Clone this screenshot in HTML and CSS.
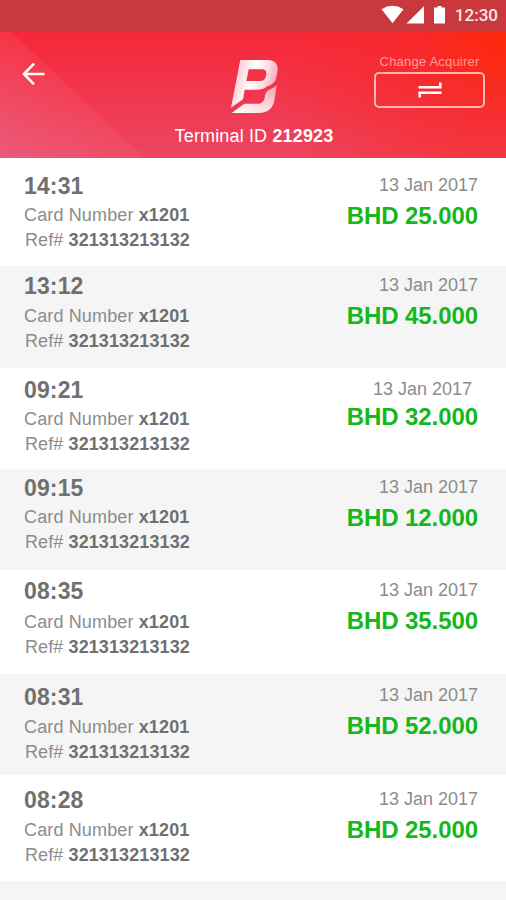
FILE: index.html
```
<!DOCTYPE html>
<html lang="en">
<head>
    <meta charset="UTF-8">
    <meta name="viewport" content="width=device-width, initial-scale=1.0">
    <title>Terminal Transactions</title>
    <link rel="stylesheet" href="styles.css">
</head>
<body>
    <div class="status-bar">
        <svg class="status-icons" width="66" height="20" viewBox="0 0 66 20">
            <path d="M0.5 4.2 Q11.5 -2.6 22.5 4.2 L11.5 18.2 Z"/>
            <path d="M43 1.2 V18.5 H25.5 Z"/>
            <path d="M53 2.5 h3.5 v-1.5 h4 v1.5 h3.5 v16 h-11 Z"/>
        </svg>
        <span class="clock">12:30</span>
    </div>

    <header class="header">
        <a href="#" class="back" aria-label="Back">
            <svg width="24" height="24" viewBox="0 0 24 24">
                <path d="M12 1.7 L2 12 L12 22.3 M2 12 H22.5"/>
            </svg>
        </a>
        <div class="brand">
            <svg width="80" height="70" viewBox="0 0 240 210">
                <defs>
                    <linearGradient id="shine" x1="0" y1="0.1" x2="1" y2="0.4">
                        <stop offset="0" stop-color="#fff"/>
                        <stop offset="0.22" stop-color="#fbd5db"/>
                        <stop offset="0.48" stop-color="#fff"/>
                        <stop offset="0.75" stop-color="#fbdde2"/>
                        <stop offset="1" stop-color="#f6a3b0"/>
                    </linearGradient>
                    <linearGradient id="shine-low" x1="0" y1="1" x2="1" y2="0">
                        <stop offset="0" stop-color="#fff"/>
                        <stop offset="0.5" stop-color="#fbd9df"/>
                        <stop offset="1" stop-color="#f6a0ae"/>
                    </linearGradient>
                </defs>
                <path fill="url(#shine)" d="M76 30 H160 C181 30 192 45 187 68 L184 82 C181 97 171 106 156 109 C148 117 138 119 125 119 H89 L84 148 L48 173 Z M101 58 L94 93 H136 C146 93 151 88 153 78 C156 65 152 58 141 58 Z" fill-rule="evenodd"/>
                <path fill="url(#shine-low)" d="M50 189 L88 161 H127 C139 161 146 155 149 143 C150 130 156 122 165 118 C173 115 179 111 185 105 L179 147 C175 175 159 189 131 189 Z"/>
            </svg>
            <p class="terminal">Terminal ID <b>212923</b></p>
        </div>
        <div class="acquirer">
            <span>Change Acquirer</span>
            <a href="#" class="swap" aria-label="Change Acquirer">
                <svg width="26" height="18" viewBox="0 0 26 18">
                    <path d="M1.5 6.2 H23.3 V1.5 M24.5 11.8 H2.7 V16.5"/>
                </svg>
            </a>
        </div>
    </header>

    <div class="list">
        <div class="row">
            <div class="info">
                <h3>14:31</h3>
                <p>Card Number <b>x1201</b></p>
                <p class="ref">Ref# <b>321313213132</b></p>
            </div>
            <div class="payment">
                <p class="date">13 Jan 2017</p>
                <p class="amount">BHD 25.000</p>
            </div>
        </div>
        <div class="row">
            <div class="info">
                <h3>13:12</h3>
                <p>Card Number <b>x1201</b></p>
                <p class="ref">Ref# <b>321313213132</b></p>
            </div>
            <div class="payment">
                <p class="date">13 Jan 2017</p>
                <p class="amount">BHD 45.000</p>
            </div>
        </div>
        <div class="row">
            <div class="info">
                <h3>09:21</h3>
                <p>Card Number <b>x1201</b></p>
                <p class="ref">Ref# <b>321313213132</b></p>
            </div>
            <div class="payment">
                <p class="date">13 Jan 2017</p>
                <p class="amount">BHD 32.000</p>
            </div>
        </div>
        <div class="row">
            <div class="info">
                <h3>09:15</h3>
                <p>Card Number <b>x1201</b></p>
                <p class="ref">Ref# <b>321313213132</b></p>
            </div>
            <div class="payment">
                <p class="date">13 Jan 2017</p>
                <p class="amount">BHD 12.000</p>
            </div>
        </div>
        <div class="row">
            <div class="info">
                <h3>08:35</h3>
                <p>Card Number <b>x1201</b></p>
                <p class="ref">Ref# <b>321313213132</b></p>
            </div>
            <div class="payment">
                <p class="date">13 Jan 2017</p>
                <p class="amount">BHD 35.500</p>
            </div>
        </div>
        <div class="row">
            <div class="info">
                <h3>08:31</h3>
                <p>Card Number <b>x1201</b></p>
                <p class="ref">Ref# <b>321313213132</b></p>
            </div>
            <div class="payment">
                <p class="date">13 Jan 2017</p>
                <p class="amount">BHD 52.000</p>
            </div>
        </div>
        <div class="row">
            <div class="info">
                <h3>08:28</h3>
                <p>Card Number <b>x1201</b></p>
                <p class="ref">Ref# <b>321313213132</b></p>
            </div>
            <div class="payment">
                <p class="date">13 Jan 2017</p>
                <p class="amount">BHD 25.000</p>
            </div>
        </div>
    </div>
</body>
</html>
```
FILE: styles.css
```
* {
    box-sizing: border-box;
}
body {
    margin: 0;
    height: 900px;
    overflow: hidden;
    font-family: 'Liberation Sans', Arial, sans-serif;
    background: #f5f5f5;
}
h3, p {
    margin: 0;
}
.status-bar {
    display: flex;
    justify-content: flex-end;
    height: 32px;
    padding: 5px 8px 0 0;
    background: #c8383c;
    color: #fff;
}
.status-icons {
    fill: #fff;
    margin-right: 8px;
}
.clock {
    font-family: Roboto, sans-serif;
    font-size: 17px;
    font-weight: 500;
    line-height: 20px;
    color: #fbe9e9;
}
.header {
    display: grid;
    grid-template-columns: 1fr 180px 1fr;
    height: 126px;
    color: #fff;
    background:
        linear-gradient(43deg, rgba(233, 120, 160, 0.4), rgba(255, 130, 140, 0.12) 99px, transparent 100px),
        radial-gradient(circle at 100% 0, #fd2a0a, rgba(250, 38, 30, 0.6) 90px, transparent 240px),
        linear-gradient(to top, #ec4560, #f6283a);
}
.back {
    padding: 30px 0 0 22px;
}
.back path, .swap path {
    fill: none;
    stroke: #fff;
    stroke-width: 2.6;
}
.brand {
    text-align: center;
    padding-top: 18px;
}
.brand svg {
    display: block;
    margin-left: 52px;
}
.terminal {
    margin-top: 5px;
    padding-left: 2px;
    font-size: 18px;
    line-height: 22px;
    letter-spacing: 0.15px;
    white-space: nowrap;
}
.acquirer {
    display: flex;
    flex-direction: column;
    align-items: center;
    width: 111px;
    margin: 20px 21px 0 auto;
    font-size: 13px;
    line-height: 20px;
    letter-spacing: 0.2px;
    color: #ff9c98;
    white-space: nowrap;
}
.swap {
    display: flex;
    align-items: center;
    justify-content: center;
    width: 111px;
    height: 36px;
    border: 2px solid #ffb5b0;
    border-radius: 5px;
}
.row {
    display: flex;
    justify-content: space-between;
    height: 101px;
    padding: 0 28px 0 24px;
    background: #fff;
    color: #8c8c8c;
    font-size: 18px;
    line-height: 25px;
}
.row:nth-child(even) {
    background: #f5f5f5;
}
.row b {
    color: #6f7070;
}
.info {
    letter-spacing: 0.14px;
}
.info h3 {
    font-size: 23px;
    line-height: 26px;
    margin-bottom: 4px;
    color: #6f7171;
}
.ref {
    padding-left: 1px;
    letter-spacing: 0.1px;
}
.payment {
    text-align: right;
}
.amount {
    margin-top: 4px;
    font-size: 24px;
    font-weight: bold;
    line-height: 28px;
    letter-spacing: -0.08px;
    color: #14b81c;
}

/* row spacing */
.row:nth-child(1) { height: 108px; }
.row:nth-child(1) .info { padding-top: 15px; }
.row:nth-child(1) .payment { padding-top: 15px; }

.row:nth-child(2) { height: 102px; }
.row:nth-child(2) .info { padding-top: 7px; }
.row:nth-child(2) .info h3 { margin-bottom: 5px; }
.row:nth-child(2) .payment { padding-top: 7px; }

.row:nth-child(3) .info { padding-top: 9px; }
.row:nth-child(3) .payment { padding-top: 9px; }
.row:nth-child(3) .date { margin-right: 6px; }
.row:nth-child(3) .amount { margin-top: 1px; }

.row:nth-child(4) .info { padding-top: 6px; }
.row:nth-child(4) .payment { padding-top: 6px; }

.row:nth-child(5) { height: 104px; }
.row:nth-child(5) .info { padding-top: 8px; }
.row:nth-child(5) .info h3 { margin-bottom: 6px; }
.row:nth-child(5) .payment { padding-top: 8px; }

.row:nth-child(6) .info { padding-top: 10px; }
.row:nth-child(6) .info h3 { margin-bottom: 5px; }
.row:nth-child(6) .payment { padding-top: 9px; }

.row:nth-child(7) { height: 106px; }
.row:nth-child(7) .info { padding-top: 12px; }
.row:nth-child(7) .info h3 { margin-bottom: 5px; }
.row:nth-child(7) .payment { padding-top: 12px; }
```
